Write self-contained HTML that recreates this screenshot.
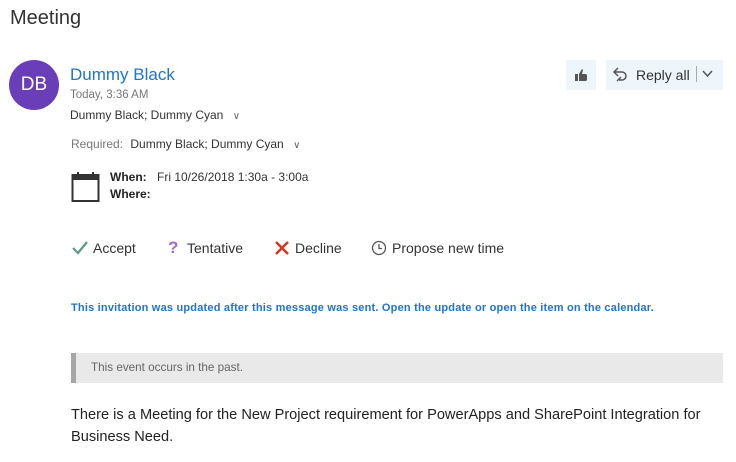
<!DOCTYPE html>
<html><head><meta charset="utf-8"><style>
*{margin:0;padding:0;box-sizing:border-box}
body{width:736px;height:462px;background:#fff;font-family:"Liberation Sans",sans-serif;color:#333;position:relative;overflow:hidden}
.a{position:absolute;white-space:nowrap}
</style></head><body>
<div class="a" style="left:10px;top:7px;font-size:20px;color:#333">Meeting</div>
<div class="a" style="left:9px;top:60px;width:50px;height:50px;border-radius:50%;background:#6a3eb8;color:#fff;font-size:19px;line-height:50px;text-align:center">DB</div>
<div class="a" style="left:70px;top:65px;font-size:17px;color:#1f74d0">Dummy Black</div>
<div class="a" style="left:70px;top:89px;font-size:11.5px;color:#777">Today, 3:36 AM</div>
<div class="a" style="left:70px;top:108px;font-size:12px;color:#333">Dummy Black; Dummy Cyan <span style="margin-left:6px;font-size:10px;color:#666">&#8744;</span></div>
<div class="a" style="left:71px;top:137px;font-size:12px;color:#777">Required: <span style="color:#333;margin-left:4px">Dummy Black; Dummy Cyan</span> <span style="margin-left:6px;font-size:10px;color:#666">&#8744;</span></div>
<svg class="a" style="left:71px;top:171px" width="30" height="32" viewBox="0 0 30 32"><rect x="1.5" y="4" width="26" height="26" fill="none" stroke="#333" stroke-width="2"/><rect x="1.5" y="4" width="26" height="5" fill="#333"/><rect x="6" y="1" width="2" height="6" fill="#333"/><rect x="21" y="1" width="2" height="6" fill="#333"/></svg>
<div class="a" style="left:110px;top:170px;font-size:12px;font-weight:bold;color:#222">When:</div>
<div class="a" style="left:157px;top:170px;font-size:12px;color:#333">Fri 10/26/2018 1:30a - 3:00a</div>
<div class="a" style="left:110px;top:187px;font-size:12px;font-weight:bold;color:#222">Where:</div>
<div class="a" style="left:566px;top:60px;width:30px;height:30px;background:#eef5fb"></div>
<svg class="a" style="left:574px;top:68px" width="14" height="14" viewBox="0 0 14 14"><path d="M1 6h3v7H1zM5 6l3-5 1 1-1 4h4l1 1v5l-1 1H5z" fill="#555"/></svg>
<div class="a" style="left:606px;top:60px;width:117px;height:30px;background:#eef5fb"></div>
<svg class="a" style="left:612px;top:66px" width="16" height="18" viewBox="0 0 16 18"><path d="M6 2L2 6l4 4M2 6h8a4 4 0 0 1 0 8H7M9 11l-4 4" fill="none" stroke="#555" stroke-width="1.5"/></svg>
<div class="a" style="left:636px;top:67px;font-size:14px;color:#333">Reply all</div>
<div class="a" style="left:696px;top:66px;width:1px;height:16px;background:#aaa"></div>
<svg class="a" style="left:702px;top:70px" width="11" height="8" viewBox="0 0 11 8"><path d="M1 1l4.5 5L10 1" fill="none" stroke="#555" stroke-width="1.5"/></svg>
<svg class="a" style="left:72px;top:241px" width="16" height="14" viewBox="0 0 16 14"><path d="M1 7l5 5L15 1" fill="none" stroke="#5a9a8a" stroke-width="2.2"/></svg>
<div class="a" style="left:93px;top:240px;font-size:14px">Accept</div>
<div class="a" style="left:168px;top:238px;font-size:17px;font-weight:bold;color:#9a6bd0">?</div>
<div class="a" style="left:187px;top:240px;font-size:14px">Tentative</div>
<svg class="a" style="left:275px;top:241px" width="14" height="14" viewBox="0 0 14 14"><path d="M1 1l12 12M13 1L1 13" stroke="#d13a1a" stroke-width="2.5"/></svg>
<div class="a" style="left:295px;top:240px;font-size:14px">Decline</div>
<svg class="a" style="left:371px;top:240px" width="16" height="16" viewBox="0 0 16 16"><circle cx="8" cy="8" r="6.5" fill="none" stroke="#555" stroke-width="1.3"/><path d="M8 4v4.5h3" fill="none" stroke="#555" stroke-width="1.3"/></svg>
<div class="a" style="left:392px;top:240px;font-size:14px">Propose new time</div>
<div class="a" style="left:71px;top:302px;font-size:11px;font-weight:bold;color:#1f74d0;letter-spacing:0.2px">This invitation was updated after this message was sent. Open the update or open the item on the calendar.</div>
<div class="a" style="left:71px;top:353px;width:652px;height:30px;background:#e9e9e9;border-left:5px solid #a6a6a6"></div>
<div class="a" style="left:91px;top:361px;font-size:11.7px;color:#666">This event occurs in the past.</div>
<div class="a" style="left:71px;top:404px;font-size:14.6px;color:#222;line-height:22px;white-space:normal;width:660px">There is a Meeting for the New Project requirement for PowerApps and SharePoint Integration for Business Need.</div>
</body></html>
